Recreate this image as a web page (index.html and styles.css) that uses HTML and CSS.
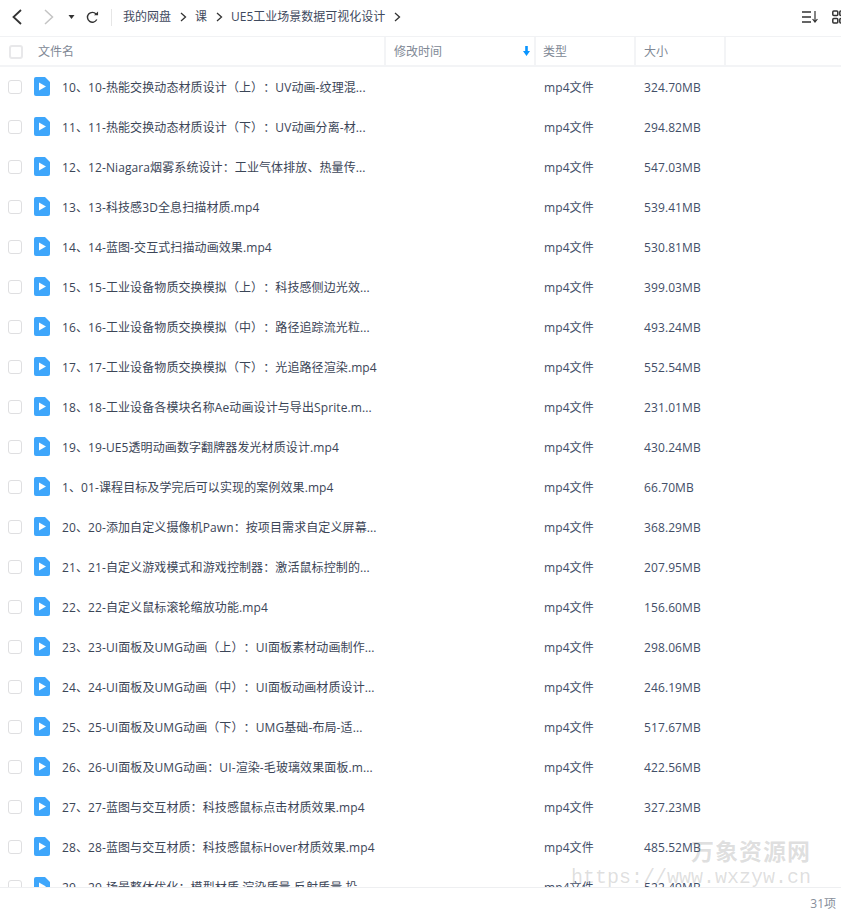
FILE: index.html
```html
<!DOCTYPE html>
<html lang="en">
<head>
  <meta charset="UTF-8">
  <meta name="viewport" content="width=device-width, initial-scale=1.0">
  <title>UE5工业场景数据可视化设计</title>
  <link rel="stylesheet" href="styles.css">
</head>
<body>
  <div class="page">
    <!-- Toolbar -->
    <div class="toolbar">
      <svg class="nav-icon back" width="14" height="18" viewBox="0 0 14 18"><path d="M11 2 L3.5 9 L11 16" fill="none" stroke="#333" stroke-width="1.8"/></svg>
      <svg class="nav-icon forward" width="14" height="18" viewBox="0 0 14 18"><path d="M3 2 L10.5 9 L3 16" fill="none" stroke="#c4c4c4" stroke-width="1.5"/></svg>
      <svg class="nav-icon caret" width="8" height="6" viewBox="0 0 8 6"><path d="M0.5 1 H6.5 L3.5 5 Z" fill="#333"/></svg>
      <svg class="nav-icon refresh" width="13" height="13" viewBox="0 0 14 14"><path d="M11.6 9.2 A5.3 5.3 0 1 1 10.8 3.2" fill="none" stroke="#333" stroke-width="1.5"/><path d="M8.6 4.6 H13 V0.6 Z" fill="#333"/></svg>
      <span class="divider"></span>
      <div class="crumbs">
        <span>我的网盘</span>
        <svg class="crumb-sep" width="7" height="10" viewBox="0 0 7 10"><path d="M1 1 L5.5 5 L1 9" fill="none" stroke="#333" stroke-width="1.3"/></svg>
        <span>课</span>
        <svg class="crumb-sep" width="7" height="10" viewBox="0 0 7 10"><path d="M1 1 L5.5 5 L1 9" fill="none" stroke="#333" stroke-width="1.3"/></svg>
        <span>UE5工业场景数据可视化设计</span>
        <svg class="crumb-sep" width="7" height="10" viewBox="0 0 7 10"><path d="M1 1 L5.5 5 L1 9" fill="none" stroke="#333" stroke-width="1.3"/></svg>
      </div>
      <div class="view-tools">
        <svg width="16" height="12" viewBox="0 0 16 12"><path d="M0 1 H9 M0 6 H9 M0 11 H9" stroke="#333" stroke-width="1.3" fill="none"/><path d="M13 0 V10.5 M10.6 8 L13 11 L15.4 8" stroke="#333" stroke-width="1.2" fill="none"/></svg>
        <svg width="14" height="14" viewBox="0 0 14 14"><rect x="0.8" y="1" width="5" height="4.5" rx="1" fill="none" stroke="#333" stroke-width="1.5"/><rect x="0.8" y="8.5" width="5" height="4.5" rx="1" fill="none" stroke="#333" stroke-width="1.5"/><rect x="7.8" y="1" width="5" height="4.5" rx="1" fill="none" stroke="#333" stroke-width="1.5"/><rect x="7.8" y="8.5" width="5" height="4.5" rx="1" fill="none" stroke="#333" stroke-width="1.5"/></svg>
      </div>
    </div>

    <!-- Column headers -->
    <div class="head">
      <div class="col-name head-cell"><span class="check head-check"></span><span class="head-title">文件名</span></div>
      <div class="col-time head-cell">修改时间
        <svg class="sort-icon" width="7" height="10" viewBox="0 0 7 10"><path d="M2.2 0 H4.8 V5 H7 L3.5 10 L0 5 H2.2 Z" fill="#0a95ff"/></svg>
      </div>
      <div class="col-type head-cell">类型</div>
      <div class="col-size head-cell">大小</div>
      <div class="col-rest"></div>
    </div>

    <!-- File rows -->
    <div class="list">
      <div class="row"><span class="check"></span><svg class="file-icon" width="16" height="19" viewBox="0 0 16 19"><path d="M2 0 H11 L16 5 V17 A2 2 0 0 1 14 19 H2 A2 2 0 0 1 0 17 V2 A2 2 0 0 1 2 0 Z" fill="#3ea6fb"/><path d="M5 5.5 L12 9.5 L5 13.5 Z" fill="#fff"/></svg><span class="name">10、10-热能交换动态材质设计（上）：UV动画-纹理混...</span><span class="type">mp4文件</span><span class="size">324.70MB</span></div>
      <div class="row"><span class="check"></span><svg class="file-icon" width="16" height="19" viewBox="0 0 16 19"><path d="M2 0 H11 L16 5 V17 A2 2 0 0 1 14 19 H2 A2 2 0 0 1 0 17 V2 A2 2 0 0 1 2 0 Z" fill="#3ea6fb"/><path d="M5 5.5 L12 9.5 L5 13.5 Z" fill="#fff"/></svg><span class="name">11、11-热能交换动态材质设计（下）：UV动画分离-材...</span><span class="type">mp4文件</span><span class="size">294.82MB</span></div>
      <div class="row"><span class="check"></span><svg class="file-icon" width="16" height="19" viewBox="0 0 16 19"><path d="M2 0 H11 L16 5 V17 A2 2 0 0 1 14 19 H2 A2 2 0 0 1 0 17 V2 A2 2 0 0 1 2 0 Z" fill="#3ea6fb"/><path d="M5 5.5 L12 9.5 L5 13.5 Z" fill="#fff"/></svg><span class="name">12、12-Niagara烟雾系统设计：工业气体排放、热量传...</span><span class="type">mp4文件</span><span class="size">547.03MB</span></div>
      <div class="row"><span class="check"></span><svg class="file-icon" width="16" height="19" viewBox="0 0 16 19"><path d="M2 0 H11 L16 5 V17 A2 2 0 0 1 14 19 H2 A2 2 0 0 1 0 17 V2 A2 2 0 0 1 2 0 Z" fill="#3ea6fb"/><path d="M5 5.5 L12 9.5 L5 13.5 Z" fill="#fff"/></svg><span class="name">13、13-科技感3D全息扫描材质.mp4</span><span class="type">mp4文件</span><span class="size">539.41MB</span></div>
      <div class="row"><span class="check"></span><svg class="file-icon" width="16" height="19" viewBox="0 0 16 19"><path d="M2 0 H11 L16 5 V17 A2 2 0 0 1 14 19 H2 A2 2 0 0 1 0 17 V2 A2 2 0 0 1 2 0 Z" fill="#3ea6fb"/><path d="M5 5.5 L12 9.5 L5 13.5 Z" fill="#fff"/></svg><span class="name">14、14-蓝图-交互式扫描动画效果.mp4</span><span class="type">mp4文件</span><span class="size">530.81MB</span></div>
      <div class="row"><span class="check"></span><svg class="file-icon" width="16" height="19" viewBox="0 0 16 19"><path d="M2 0 H11 L16 5 V17 A2 2 0 0 1 14 19 H2 A2 2 0 0 1 0 17 V2 A2 2 0 0 1 2 0 Z" fill="#3ea6fb"/><path d="M5 5.5 L12 9.5 L5 13.5 Z" fill="#fff"/></svg><span class="name">15、15-工业设备物质交换模拟（上）：科技感侧边光效...</span><span class="type">mp4文件</span><span class="size">399.03MB</span></div>
      <div class="row"><span class="check"></span><svg class="file-icon" width="16" height="19" viewBox="0 0 16 19"><path d="M2 0 H11 L16 5 V17 A2 2 0 0 1 14 19 H2 A2 2 0 0 1 0 17 V2 A2 2 0 0 1 2 0 Z" fill="#3ea6fb"/><path d="M5 5.5 L12 9.5 L5 13.5 Z" fill="#fff"/></svg><span class="name">16、16-工业设备物质交换模拟（中）：路径追踪流光粒...</span><span class="type">mp4文件</span><span class="size">493.24MB</span></div>
      <div class="row"><span class="check"></span><svg class="file-icon" width="16" height="19" viewBox="0 0 16 19"><path d="M2 0 H11 L16 5 V17 A2 2 0 0 1 14 19 H2 A2 2 0 0 1 0 17 V2 A2 2 0 0 1 2 0 Z" fill="#3ea6fb"/><path d="M5 5.5 L12 9.5 L5 13.5 Z" fill="#fff"/></svg><span class="name">17、17-工业设备物质交换模拟（下）：光追路径渲染.mp4</span><span class="type">mp4文件</span><span class="size">552.54MB</span></div>
      <div class="row"><span class="check"></span><svg class="file-icon" width="16" height="19" viewBox="0 0 16 19"><path d="M2 0 H11 L16 5 V17 A2 2 0 0 1 14 19 H2 A2 2 0 0 1 0 17 V2 A2 2 0 0 1 2 0 Z" fill="#3ea6fb"/><path d="M5 5.5 L12 9.5 L5 13.5 Z" fill="#fff"/></svg><span class="name">18、18-工业设备各模块名称Ae动画设计与导出Sprite.m...</span><span class="type">mp4文件</span><span class="size">231.01MB</span></div>
      <div class="row"><span class="check"></span><svg class="file-icon" width="16" height="19" viewBox="0 0 16 19"><path d="M2 0 H11 L16 5 V17 A2 2 0 0 1 14 19 H2 A2 2 0 0 1 0 17 V2 A2 2 0 0 1 2 0 Z" fill="#3ea6fb"/><path d="M5 5.5 L12 9.5 L5 13.5 Z" fill="#fff"/></svg><span class="name">19、19-UE5透明动画数字翻牌器发光材质设计.mp4</span><span class="type">mp4文件</span><span class="size">430.24MB</span></div>
      <div class="row"><span class="check"></span><svg class="file-icon" width="16" height="19" viewBox="0 0 16 19"><path d="M2 0 H11 L16 5 V17 A2 2 0 0 1 14 19 H2 A2 2 0 0 1 0 17 V2 A2 2 0 0 1 2 0 Z" fill="#3ea6fb"/><path d="M5 5.5 L12 9.5 L5 13.5 Z" fill="#fff"/></svg><span class="name">1、01-课程目标及学完后可以实现的案例效果.mp4</span><span class="type">mp4文件</span><span class="size">66.70MB</span></div>
      <div class="row"><span class="check"></span><svg class="file-icon" width="16" height="19" viewBox="0 0 16 19"><path d="M2 0 H11 L16 5 V17 A2 2 0 0 1 14 19 H2 A2 2 0 0 1 0 17 V2 A2 2 0 0 1 2 0 Z" fill="#3ea6fb"/><path d="M5 5.5 L12 9.5 L5 13.5 Z" fill="#fff"/></svg><span class="name">20、20-添加自定义摄像机Pawn：按项目需求自定义屏幕...</span><span class="type">mp4文件</span><span class="size">368.29MB</span></div>
      <div class="row"><span class="check"></span><svg class="file-icon" width="16" height="19" viewBox="0 0 16 19"><path d="M2 0 H11 L16 5 V17 A2 2 0 0 1 14 19 H2 A2 2 0 0 1 0 17 V2 A2 2 0 0 1 2 0 Z" fill="#3ea6fb"/><path d="M5 5.5 L12 9.5 L5 13.5 Z" fill="#fff"/></svg><span class="name">21、21-自定义游戏模式和游戏控制器：激活鼠标控制的...</span><span class="type">mp4文件</span><span class="size">207.95MB</span></div>
      <div class="row"><span class="check"></span><svg class="file-icon" width="16" height="19" viewBox="0 0 16 19"><path d="M2 0 H11 L16 5 V17 A2 2 0 0 1 14 19 H2 A2 2 0 0 1 0 17 V2 A2 2 0 0 1 2 0 Z" fill="#3ea6fb"/><path d="M5 5.5 L12 9.5 L5 13.5 Z" fill="#fff"/></svg><span class="name">22、22-自定义鼠标滚轮缩放功能.mp4</span><span class="type">mp4文件</span><span class="size">156.60MB</span></div>
      <div class="row"><span class="check"></span><svg class="file-icon" width="16" height="19" viewBox="0 0 16 19"><path d="M2 0 H11 L16 5 V17 A2 2 0 0 1 14 19 H2 A2 2 0 0 1 0 17 V2 A2 2 0 0 1 2 0 Z" fill="#3ea6fb"/><path d="M5 5.5 L12 9.5 L5 13.5 Z" fill="#fff"/></svg><span class="name">23、23-UI面板及UMG动画（上）：UI面板素材动画制作...</span><span class="type">mp4文件</span><span class="size">298.06MB</span></div>
      <div class="row"><span class="check"></span><svg class="file-icon" width="16" height="19" viewBox="0 0 16 19"><path d="M2 0 H11 L16 5 V17 A2 2 0 0 1 14 19 H2 A2 2 0 0 1 0 17 V2 A2 2 0 0 1 2 0 Z" fill="#3ea6fb"/><path d="M5 5.5 L12 9.5 L5 13.5 Z" fill="#fff"/></svg><span class="name">24、24-UI面板及UMG动画（中）：UI面板动画材质设计...</span><span class="type">mp4文件</span><span class="size">246.19MB</span></div>
      <div class="row"><span class="check"></span><svg class="file-icon" width="16" height="19" viewBox="0 0 16 19"><path d="M2 0 H11 L16 5 V17 A2 2 0 0 1 14 19 H2 A2 2 0 0 1 0 17 V2 A2 2 0 0 1 2 0 Z" fill="#3ea6fb"/><path d="M5 5.5 L12 9.5 L5 13.5 Z" fill="#fff"/></svg><span class="name">25、25-UI面板及UMG动画（下）：UMG基础-布局-适...</span><span class="type">mp4文件</span><span class="size">517.67MB</span></div>
      <div class="row"><span class="check"></span><svg class="file-icon" width="16" height="19" viewBox="0 0 16 19"><path d="M2 0 H11 L16 5 V17 A2 2 0 0 1 14 19 H2 A2 2 0 0 1 0 17 V2 A2 2 0 0 1 2 0 Z" fill="#3ea6fb"/><path d="M5 5.5 L12 9.5 L5 13.5 Z" fill="#fff"/></svg><span class="name">26、26-UI面板及UMG动画：UI-渲染-毛玻璃效果面板.m...</span><span class="type">mp4文件</span><span class="size">422.56MB</span></div>
      <div class="row"><span class="check"></span><svg class="file-icon" width="16" height="19" viewBox="0 0 16 19"><path d="M2 0 H11 L16 5 V17 A2 2 0 0 1 14 19 H2 A2 2 0 0 1 0 17 V2 A2 2 0 0 1 2 0 Z" fill="#3ea6fb"/><path d="M5 5.5 L12 9.5 L5 13.5 Z" fill="#fff"/></svg><span class="name">27、27-蓝图与交互材质：科技感鼠标点击材质效果.mp4</span><span class="type">mp4文件</span><span class="size">327.23MB</span></div>
      <div class="row"><span class="check"></span><svg class="file-icon" width="16" height="19" viewBox="0 0 16 19"><path d="M2 0 H11 L16 5 V17 A2 2 0 0 1 14 19 H2 A2 2 0 0 1 0 17 V2 A2 2 0 0 1 2 0 Z" fill="#3ea6fb"/><path d="M5 5.5 L12 9.5 L5 13.5 Z" fill="#fff"/></svg><span class="name">28、28-蓝图与交互材质：科技感鼠标Hover材质效果.mp4</span><span class="type">mp4文件</span><span class="size">485.52MB</span></div>
      <div class="row"><span class="check"></span><svg class="file-icon" width="16" height="19" viewBox="0 0 16 19"><path d="M2 0 H11 L16 5 V17 A2 2 0 0 1 14 19 H2 A2 2 0 0 1 0 17 V2 A2 2 0 0 1 2 0 Z" fill="#3ea6fb"/><path d="M5 5.5 L12 9.5 L5 13.5 Z" fill="#fff"/></svg><span class="name">29、29-场景整体优化：模型材质 渲染质量 反射质量 投...</span><span class="type">mp4文件</span><span class="size">522.49MB</span></div>
    </div>

    <!-- Footer -->
    <div class="footer">31项</div>

    <!-- Watermark over the list -->
    <div class="watermark">
      <div class="wm-title">万象资源网</div>
      <div class="wm-url">https://www.wxzyw.cn</div>
    </div>
  </div>
</body>
</html>
```

FILE: styles.css
```css
/* General Styles */
html,
body {
  margin: 0;
  padding: 0;
  background-color: #fff;
}

body {
  font-family: "Open Sans", "Noto Sans CJK SC", sans-serif;
  font-size: 12px;
  line-height: 16px;
  color: #424e67;
  text-spacing-trim: space-all;
}

.page {
  position: relative;
  display: flex;
  flex-direction: column;
  width: 841px;
  height: 913px;
  overflow: hidden;
}

/* Toolbar */
.toolbar {
  display: flex;
  align-items: center;
  flex: none;
  box-sizing: border-box;
  height: 37px;
  padding-bottom: 2px;
  border-bottom: 1px solid #f1f2f4;
  overflow: hidden;
}

.back {
  margin-left: 10px;
}

.forward {
  margin-left: 18px;
}

.caret {
  margin-left: 12px;
}

.refresh {
  margin-left: 10px;
}

.divider {
  width: 1px;
  height: 17px;
  margin-left: 12px;
  background-color: #e6e6e6;
}

.crumbs {
  display: flex;
  align-items: center;
  margin-left: 11px;
  color: #3f4a5e;
}

.crumb-sep {
  margin: 0 8px 0 9px;
}

.view-tools {
  display: flex;
  align-items: center;
  gap: 14px;
  margin-left: auto;
  margin-right: -5px;
}

/* Column headers */
.head {
  display: flex;
  flex: none;
  box-sizing: border-box;
  height: 30px;
  border-bottom: 2px solid #f3f4f6;
  color: #808895;
}

.head-cell {
  display: flex;
  align-items: center;
  box-sizing: border-box;
  padding-top: 2px;
  border-right: 2px solid #f3f4f6;
}

.col-name {
  width: 386px;
}

.col-time {
  position: relative;
  width: 150px;
  padding-left: 8px;
}

.col-type {
  width: 100px;
  padding-left: 7px;
}

.col-size {
  width: 90px;
  padding-left: 8px;
}

.col-rest {
  flex: 1;
}

.sort-icon {
  position: absolute;
  right: 4px;
  top: 9px;
}

.head-title {
  margin-left: 15px;
}

/* Checkboxes */
.check {
  box-sizing: border-box;
  flex: none;
  width: 14px;
  height: 14px;
  margin-left: 8px;
  border: 1px solid #dfdfe1;
  border-radius: 3px;
  background-color: #fff;
}

.head-check {
  border: 2px solid #e8e8ea;
  margin-left: 9px;
}

/* File rows */
.list {
  flex: 1;
  overflow: hidden;
}

.row {
  display: flex;
  align-items: center;
  height: 40px;
  letter-spacing: 0.1px;
  white-space: nowrap;
}

.file-icon {
  flex: none;
  margin-left: 12px;
  margin-top: -1px;
}

.name {
  box-sizing: border-box;
  width: 494px;
  padding-top: 2px;
  padding-left: 12px;
  color: #3b4557;
}

.type {
  width: 100px;
  padding-top: 2px;
}

.size {
  flex: 1;
  padding-top: 2px;
}

/* Footer */
.footer {
  flex: none;
  box-sizing: border-box;
  height: 26px;
  border-top: 1px solid #eeeff1;
  padding-right: 5px;
  line-height: 31px;
  text-align: right;
  color: #888f9b;
}

/* Watermark */
.watermark {
  position: absolute;
  left: 570px;
  top: 836px;
  width: 241px;
  color: rgba(110, 110, 110, 0.22);
  text-align: right;
  pointer-events: none;
}

.wm-title {
  font-size: 23px;
  font-weight: 700;
  line-height: 30px;
  letter-spacing: 1px;
}

.wm-url {
  font-family: "Liberation Mono", monospace;
  font-size: 20px;
  line-height: 24px;
  white-space: nowrap;
}
```
